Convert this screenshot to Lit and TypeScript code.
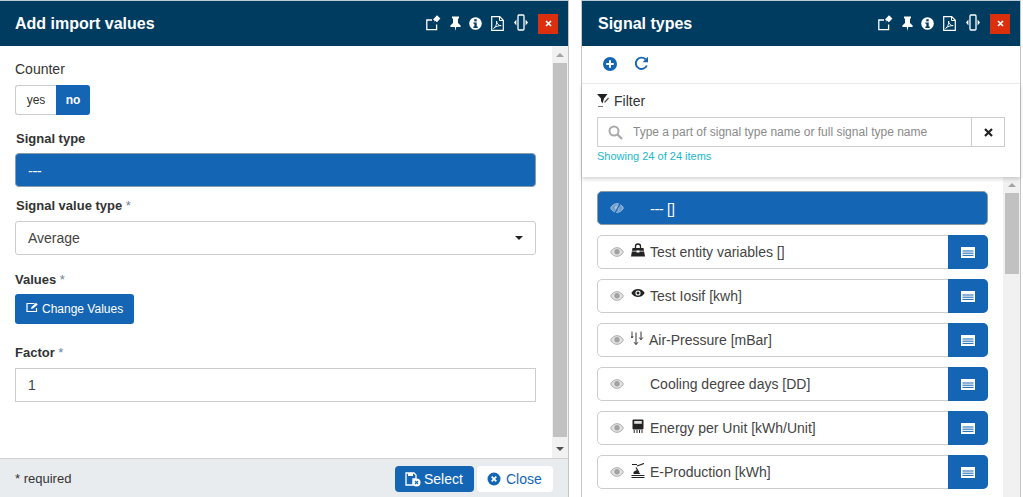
import { LitElement, html, css, svg } from "lit";
import { customElement } from "lit/decorators.js";

const headerIcons = html`
  <svg class="hi i-share" viewBox="0 0 15 16"><path d="M6 5.500H.8v9.700h9.800V10" fill="none" stroke="#fff" stroke-width="1.300"/><path d="M6.500 10l2.300-3.400-1.800-1.500L11 .8l3.400 3.200-3.500 3.700-1.700-1.400z" fill="#fff"/></svg>
  <svg class="hi i-pin" viewBox="0 0 11 15"><path d="M2 .5h7v1.600L8 3v4l2.600 2.600V11H6.200l-.7 4-.7-4H.4V9.600L3 7V3L2 2.100z" fill="#fff"/></svg>
  <svg class="hi i-info" viewBox="0 0 13 13"><circle cx="6.500" cy="6.500" r="6.300" fill="#fff"/><rect x="5.300" y="2.200" width="2.400" height="2.200" fill="#003c60"/><path d="M4.400 5.400h3.300v4.200h1v1.300H4.400V9.600h1V6.700h-1z" fill="#003c60"/></svg>
  <svg class="hi i-pdf" viewBox="0 0 13 15"><path d="M.7.700h8l3.600 3.600v10H.7z" fill="none" stroke="#fff" stroke-width="1.200"/><path d="M8.500.700v3.800h3.800" fill="none" stroke="#fff"/><path d="M2.600 12.400c2-1 3.600-5 3-7.400-.3 2 2 5 4.600 4.600-2.600 0-5.700.8-7.600 2.800z" fill="none" stroke="#fff" stroke-width=".9"/></svg>
  <svg class="hi i-width" viewBox="0 0 14 17"><rect x="4" y="1" width="6" height="15" rx="1" fill="none" stroke="#fff" stroke-width="1.300"/><path d="M2.400 5.500v6L0 8.500zM11.600 5.500v6L14 8.500z" fill="#fff"/></svg>
  <span class="close-x">
    <svg width="7" height="7" viewBox="0 0 7 7"><path d="M1 1l5 5M6 1L1 6" stroke="#fff" stroke-width="1.700"/></svg>
  </span>
`;

const eye = html`<svg class="eye" viewBox="0 0 14 10"><path d="M.6 5C2.500 1.800 4.700.7 7 .7s4.500 1.100 6.400 4.300C11.500 8.200 9.300 9.300 7 9.300S2.500 8.200.6 5z" fill="#e4e4e4" stroke="#a8a8a8" stroke-width="1"/><circle cx="7" cy="4.800" r="2.700" fill="#a2a2a2"/></svg>`;

const eyeSlash = html`<svg class="eye" viewBox="0 0 14 10"><path d="M.6 5C2.500 1.800 4.700.7 7 .7s4.500 1.100 6.400 4.300C11.500 8.200 9.300 9.300 7 9.300S2.500 8.200.6 5z" fill="#6e9dcc" stroke="#a5c2de" stroke-width="1"/><circle cx="7" cy="4.800" r="2.400" fill="#a5c2de"/><path d="M10.500 0L5 10" stroke="#1465b3" stroke-width="1.300"/></svg>`;

const glyphs: Record<string, unknown> = {
  bag: svg`<path d="M4.500 5V3.200C4.500 1.800 5.600 1 7 1s2.500.8 2.500 2.200V5" fill="none" stroke="#222" stroke-width="1.300"/><path d="M1.500 5h11l1.500 8.500H0z" fill="#222"/><path d="M1 8.200h12" stroke="#fff" stroke-width=".7"/><rect x="5.500" y="7.500" width="3" height="2" fill="#fff"/>`,
  eye: svg`<path d="M.3 6C2.300 2.800 4.700 2 7 2s4.700.8 6.700 4c-2 3.200-4.400 4-6.700 4S2.300 9.200.3 6z" fill="#222"/><circle cx="7" cy="6" r="2.600" fill="#fff"/><circle cx="7" cy="6" r="1.500" fill="#222"/>`,
  air: svg`<path d="M5 1.500v12M3 11.200l2 2.300 2-2.300" fill="none" stroke="#333" stroke-width="1"/><path d="M1 .5v6.500M0 5.200L1 7l1-1.800" fill="none" stroke="#333" stroke-width=".9"/><path d="M10 .5v8M8.200 6.500L10 8.700l1.800-2.200" fill="none" stroke="#333" stroke-width="1"/>`,
  energy: svg`<rect x="1.500" y="0.500" width="11" height="10" rx="1" fill="#222"/><rect x="3.200" y="2" width="7.600" height="2.800" fill="#ddd"/><path d="M3.200 11v3M6 11v3M8.500 11v3M11 11v3" stroke="#222" stroke-width="1"/>`,
  prod: svg`<path d="M1 1.500h5M6 3l7-2.500M5 4.500l3 5" stroke="#222" stroke-width="1.200" fill="none"/><path d="M2.500 9l3-2 4 4H2.500z" fill="#222"/><path d="M.5 12.500h13M.5 14.500h13" stroke="#222" stroke-width="1.200"/>`,
};

const rows: { glyph?: string; text: string }[] = [
  { glyph: "bag", text: "Test entity variables []" },
  { glyph: "eye", text: "Test Iosif [kwh]" },
  { glyph: "air", text: "Air-Pressure [mBar]" },
  { text: "Cooling degree days [DD]" },
  { glyph: "energy", text: "Energy per Unit [kWh/Unit]" },
  { glyph: "prod", text: "E-Production [kWh]" },
];

@customElement("app-root")
export class AppRoot extends LitElement {
  static styles = css`
    :host {
      display: flex;
      width: 1023px;
      height: 497px;
      overflow: hidden;
      background: #fff;
      font-family: "Liberation Sans", Arial, sans-serif;
      color: #333;
      font-size: 14px;
    }
    .panel {
      display: flex;
      flex-direction: column;
      height: 497px;
      box-sizing: border-box;
      border-top: 1px solid #b9cbd6;
      flex: none;
      min-width: 0;
    }
    .left { width: 569px; border-right: 1px solid #c4c4c4; }
    .right { width: 440px; margin-left: 12px; border-left: 1px solid #c4c4c4; border-right: 1px solid #c4c4c4; }
    .header {
      flex: none;
      height: 45px;
      background: #003c60;
      display: flex;
      align-items: center;
      padding: 0 10px 0 15px;
      box-sizing: border-box;
    }
    .right .header { padding-left: 16px; padding-right: 10px; }
    .title { flex: 1; color: #fff; font-weight: 700; font-size: 16px; }
    .hi { height: 17px; display: block; }
    .i-share { width: 15px; margin-top: -2px; }
    .i-pin { width: 11px; margin-left: 9px; }
    .i-info { width: 13px; margin-left: 8px; }
    .i-pdf { width: 13px; margin-left: 9px; }
    .i-width { width: 14px; margin-left: 10px; margin-top: -3px; }
    .close-x {
      width: 20px;
      height: 20px;
      background: #dc2f0e;
      margin-left: 10px;
      display: flex;
      align-items: center;
      justify-content: center;
    }
    .content { flex: 1; display: flex; min-height: 0; }
    .form { flex: 1; padding: 15px 16px 0 15px; min-width: 0; box-sizing: border-box; }
    .label { font-size: 14px; line-height: 16px; color: #333; display: block; }
    .label.b { font-weight: 700; font-size: 13px; padding: 1px 0 0 1px; margin-bottom: -1px; }
    .label.nudge { padding-left: 0; }
    .req { color: #6c8294; font-weight: 400; }
    .toggle { display: flex; margin-top: 8px; width: 75px; height: 30px; box-sizing: border-box; font-size: 12px; }
    .toggle span { display: flex; align-items: center; justify-content: center; }
    .yes { width: 41px; border: 1px solid #ccc; border-right: 0; border-radius: 3px 0 0 3px; box-sizing: border-box; }
    .no { flex: 1; background: #1465b3; color: #fff; font-weight: 700; border-radius: 0 3px 3px 0; }
    .dashes { font-size: 15px; letter-spacing: -0.6px; }
    .sig {
      margin-top: 7px;
      height: 34px;
      background: #1465b3;
      border: 1px solid #8a9bab;
      border-radius: 4px;
      box-sizing: border-box;
      color: #fff;
      display: flex;
      align-items: center;
      padding-left: 12px;
      font-size: 14px;
    }
    .select, .input {
      margin-top: 8px;
      height: 34px;
      border: 1px solid #ccc;
      border-radius: 3px;
      box-sizing: border-box;
      display: flex;
      align-items: center;
      padding: 0 12px;
      font-size: 14px;
      color: #444;
      justify-content: space-between;
    }
    .input { border-radius: 0; }
    .caret { width: 0; height: 0; border: 4px solid transparent; border-top-color: #222; border-bottom: 0; }
    .btn {
      background: #1465b3;
      color: #fff;
      border-radius: 3px;
      display: inline-flex;
      align-items: center;
      font-size: 12px;
    }
    .change { height: 30px; width: 119px; margin-top: 7px; padding-left: 11px; box-sizing: border-box; gap: 3px; }
    .change svg { margin-top: -3px; }
    .mt1 { margin-top: 15px; }
    .mt2 { margin-top: 16px; }
    .mt3 { margin-top: 10px; }
    .mt4 { margin-top: 20px; }
    .scroll {
      flex: none;
      width: 16px;
      background: #f1f1f1;
      display: flex;
      flex-direction: column;
      align-items: center;
    }
    .up { width: 0; height: 0; border: 4px solid transparent; border-bottom-color: #a3a3a3; border-top: 0; }
    .thumb { width: 14px; background: #c1c1c1; margin-top: 6px; }
    .down { width: 0; height: 0; border: 4px solid transparent; border-top-color: #505050; border-bottom: 0; margin-top: 10px; }
    .left .up { margin-top: 7px; }
    .left .thumb { height: 374px; }
    .right .up { margin-top: 6px; }
    .right .thumb { height: 81px; }
    .footer {
      flex: none;
      height: 39px;
      background: #e9ecef;
      border-top: 1px solid #d0d0d0;
      box-sizing: border-box;
      display: flex;
      align-items: center;
      padding: 0 15px 0 15px;
      font-size: 13px;
      color: #333;
    }
    .footer .grow { flex: 1; }
    .fb {
      height: 26px;
      border-radius: 4px;
      display: flex;
      align-items: center;
      font-size: 14px;
      box-sizing: border-box;
      gap: 3px;
      margin-top: 2px;
      padding-left: 10px;
    }
    .select-btn { background: #1465b3; color: #fff; width: 79px; }
    .close-btn { background: #fff; color: #1465b3; width: 76px; margin-left: 3px; gap: 5px; }
    .toolbar {
      flex: none;
      height: 38px;
      display: flex;
      align-items: center;
      gap: 17px;
      padding: 0 0 2px 21px;
      border-bottom: 1px solid #eee;
      box-sizing: border-box;
    }
    .filter {
      flex: none;
      height: 93px;
      padding: 9px 15px 0;
      box-sizing: border-box;
      box-shadow: 0 2px 4px rgba(0,0,0,.18);
      position: relative;
    }
    .flabel { display: flex; align-items: center; gap: 3px; font-size: 14px; line-height: 16px; color: #333; }
    .search { display: flex; margin-top: 8px; height: 30px; }
    .sbox {
      flex: 1;
      border: 1px solid #ccc;
      display: flex;
      align-items: center;
      padding-left: 10px;
      gap: 10px;
      font-size: 12px;
      color: #8a8a8a;
      min-width: 0;
    }
    .clear {
      width: 32px;
      border: 1px solid #ccc;
      border-left: 0;
      display: flex;
      align-items: center;
      justify-content: center;
    }
    .count { color: #18b8c9; font-size: 11px; line-height: 12px; margin-top: 3px; }
    .lst { flex: 1; display: flex; min-height: 0; }
    .items { flex: 1; padding: 14px 15px 0; display: flex; flex-direction: column; gap: 10px; min-width: 0; overflow: hidden; }
    .row {
      flex: none;
      height: 34px;
      display: flex;
      border: 1px solid #ccc;
      border-radius: 5px;
      box-sizing: border-box;
      align-items: center;
      font-size: 14px;
      color: #444;
      position: relative;
    }
    .row.sel { background: #1465b3; border-color: #8a9bab; color: #fff; }
    .eye { width: 14px; height: 10px; margin-left: 12px; flex: none; }
    .g { width: 14px; height: 15px; margin: -3px 5px 0 7px; flex: none; }
    .g.air { margin-right: 4px; }
    .sp { width: 14px; margin: 0 5px 0 7px; flex: none; }
    .rowtext { flex: 1; }
    .rb {
      width: 40px;
      height: 34px;
      margin: -1px -1px -1px 0;
      background: #1465b3;
      border-radius: 0 5px 5px 0;
      display: flex;
      align-items: center;
      justify-content: center;
      flex: none;
    }
    .right .scroll { width: 17px; }
  `;

  render() {
    return html`
      <section class="panel left">
        <div class="header"><div class="title">Add import values</div>${headerIcons}</div>
        <div class="content">
          <div class="form">
            <span class="label">Counter</span>
            <div class="toggle"><span class="yes">yes</span><span class="no">no</span></div>
            <span class="label b mt1">Signal type</span>
            <div class="sig"><span class="dashes">---</span></div>
            <span class="label b mt3">Signal value type <span class="req">*</span></span>
            <div class="select">Average<span class="caret"></span></div>
            <span class="label b nudge mt2">Values <span class="req">*</span></span>
            <div class="btn change">
              <svg width="13" height="11" viewBox="0 0 13 11"><path d="M8.500 1.500H1v8h9.500V6" fill="none" stroke="#fff" stroke-width="1.200"/><path d="M5 7l.5-2L10 .8l1.800 1.600L7 6.500z" fill="#fff"/></svg>
              Change Values
            </div>
            <span class="label b nudge mt4">Factor <span class="req">*</span></span>
            <div class="input">1</div>
          </div>
          <div class="scroll"><span class="up"></span><div class="thumb"></div><span class="down"></span></div>
        </div>
        <div class="footer">
          <span>* required</span><span class="grow"></span>
          <div class="fb select-btn">
            <svg width="16" height="15" viewBox="0 0 16 15"><path d="M1 1h8l2 2v4H8v6H1z" fill="none" stroke="#fff" stroke-width="1.300"/><rect x="3" y="1" width="5" height="3" fill="#fff"/><circle cx="11.500" cy="10.500" r="4" fill="#fff"/><path d="M10 9l3 3M13 9l-3 3" stroke="#1465b3" stroke-width="1.100"/></svg>
            Select
          </div>
          <div class="fb close-btn">
            <svg width="14" height="14" viewBox="0 0 14 14"><circle cx="7" cy="7" r="6.500" fill="#1465b3"/><path d="M4.700 4.700l4.600 4.600M9.300 4.700l-4.600 4.600" stroke="#fff" stroke-width="1.800"/></svg>
            Close
          </div>
        </div>
      </section>
      <section class="panel right">
        <div class="header"><div class="title">Signal types</div>${headerIcons}</div>
        <div class="toolbar">
          <svg width="14" height="14" viewBox="0 0 14 14"><circle cx="7" cy="7" r="7" fill="#1465b3"/><path d="M7 3.200v7.600M3.200 7h7.600" stroke="#fff" stroke-width="2"/></svg>
          <svg width="15" height="15" viewBox="0 0 15 15"><path d="M12.800 9.500A5.700 5.700 0 1 1 11.500 3.200" fill="none" stroke="#1465b3" stroke-width="1.900"/><path d="M14 .8v5.400H8.600z" fill="#1465b3"/></svg>
        </div>
        <div class="filter">
          <div class="flabel">
            <svg width="14" height="14" viewBox="0 0 14 14"><path d="M0 0h10.500L7 4.500l-1.500 5L4 7V4.500z" fill="#222"/><path d="M7.500 8.500l4-4.500" stroke="#555" stroke-width="1.200"/><path d="M1 12.500h5" stroke="#777" stroke-width="1"/></svg>
            Filter
          </div>
          <div class="search">
            <div class="sbox">
              <svg width="15" height="15" viewBox="0 0 15 15"><circle cx="6" cy="6" r="4.500" fill="none" stroke="#aaa" stroke-width="2"/><path d="M9.500 9.500l4.500 4.500" stroke="#aaa" stroke-width="2.400"/></svg>
              Type a part of signal type name or full signal type name
            </div>
            <div class="clear"><svg width="9" height="9" viewBox="0 0 9 9"><path d="M1 1l7 7M8 1L1 8" stroke="#222" stroke-width="2.200"/></svg></div>
          </div>
          <div class="count">Showing 24 of 24 items</div>
        </div>
        <div class="lst">
          <div class="items">
            <div class="row sel">${eyeSlash}<span class="sp"></span><span class="rowtext"><span class="dashes">---</span> []</span></div>
            ${rows.map(
              (r) => html`<div class="row">
                ${eye}
                ${r.glyph ? html`<svg class="g ${r.glyph}" viewBox="0 0 14 15">${glyphs[r.glyph]}</svg>` : html`<span class="sp"></span>`}
                <span class="rowtext">${r.text}</span>
                <span class="rb"><svg width="14" height="11" viewBox="0 0 14 11"><rect width="14" height="11" fill="#fff"/><path d="M1.500 4h11M1.500 6.200h11M1.500 8.400h11" stroke="#1465b3" stroke-width="1"/></svg></span>
              </div>`
            )}
          </div>
          <div class="scroll"><span class="up"></span><div class="thumb"></div></div>
        </div>
      </section>
    `;
  }
}
